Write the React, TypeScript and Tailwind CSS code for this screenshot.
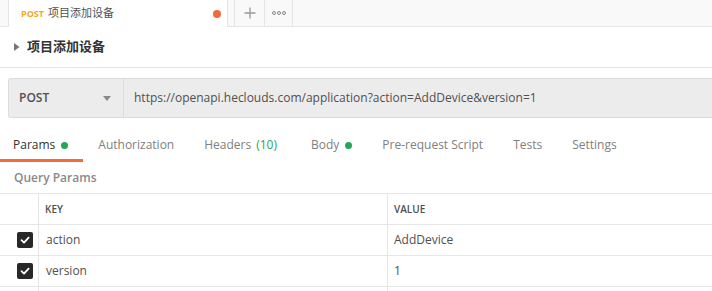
import React from 'react';

const tabs = [
    { label: 'Params', dot: true, active: true },
    { label: 'Authorization' },
    { label: 'Headers', count: '(10)' },
    { label: 'Body', dot: true },
    { label: 'Pre-request Script' },
    { label: 'Tests' },
    { label: 'Settings' },
];

const rows = [
    { key: 'action', value: 'AddDevice' },
    { key: 'version', value: '1' },
];

const Check: React.FC = () => (
    <div className="flex h-[16px] w-[16px] items-center justify-center rounded-[2px] bg-[#282828]">
        <svg width="10" height="10" viewBox="0 0 10 10">
            <path d="M1.5 5.2 L4 7.6 L8.6 2.6" fill="none" stroke="#fff" strokeWidth="1.8" strokeLinecap="round" strokeLinejoin="round" />
        </svg>
    </div>
);

const App: React.FC = () => {
    return (
        <div className="h-[291px] w-[712px] overflow-hidden bg-white font-['Open_Sans','Noto_Sans_CJK_SC',sans-serif] text-[#505050]">
            {/* Request tabs */}
            <div className="flex h-[27px] bg-[#f9f9f9]">
                <div className="w-[9px] border-b border-r border-[#e5e5e5]"></div>
                <div className="flex w-[218px] items-center bg-white pl-[12px] pr-[6px]">
                    <span className="text-[9px] font-bold text-[#f5a623]">POST</span>
                    <span className="ml-[4px] text-[11px] text-[#505050]">项目添加设备</span>
                    <span className="ml-auto h-[8px] w-[8px] rounded-full bg-[#f26b3a]"></span>
                </div>
                <div className="w-[7px] border-b border-l border-[#e5e5e5]"></div>
                <div className="flex w-[30px] items-center justify-center border-b border-l border-[#e5e5e5]">
                    <svg width="12" height="12" viewBox="0 0 12 12">
                        <path d="M6 0.5 V11.5 M0.5 6 H11.5" stroke="#999" strokeWidth="1.3" />
                    </svg>
                </div>
                <div className="flex w-[29px] items-center justify-center gap-[1px] border-b border-l border-r border-[#e5e5e5]">
                    {[0, 1, 2].map((i) => (
                        <span key={i} className="h-[4px] w-[4px] rounded-full border border-[#888]"></span>
                    ))}
                </div>
                <div className="flex-1 border-b border-[#e5e5e5]"></div>
            </div>

            {/* Request name */}
            <div className="flex h-[41px] items-center border-b border-[#e5e5e5] pl-[14px]">
                <svg width="6" height="8" viewBox="0 0 6 8">
                    <path d="M0 0 L5.5 4 L0 8 Z" fill="#777" />
                </svg>
                <span className="ml-[7px] text-[13px] font-semibold text-[#333]">项目添加设备</span>
            </div>

            {/* URL bar */}
            <div className="ml-[8px] mt-[10px] flex h-[40px] rounded-l-[3px] border border-r-0 border-[#dcdcdc] bg-[#ececec]">
                <div className="flex w-[115px] items-center border-r border-[#dcdcdc] pl-[10px] pr-[12px]">
                    <span className="text-[12px] font-semibold text-[#505050]">POST</span>
                    <svg className="ml-auto" width="8" height="5" viewBox="0 0 8 5">
                        <path d="M0 0 H8 L4 5 Z" fill="#888" />
                    </svg>
                </div>
                <div className="flex items-center pl-[10px] text-[12px] text-[#505050]">
                    https://openapi.heclouds.com/application?action=AddDevice&amp;version=1
                </div>
            </div>

            {/* Tabs */}
            <div className="mt-[13px] flex h-[31px] items-stretch">
                {tabs.map((t) => (
                    <div
                        key={t.label}
                        className={`flex items-center border-b-[3px] text-[12px] ${t.active ? 'mr-[15px] border-[#f26b3a] pl-[13px] pr-[15px] text-[#333]' : 'border-transparent text-[#808080]'} ${t.count ? 'mr-[34px]' : t.active ? '' : 'mr-[30px]'}`}
                    >
                        <span>{t.label}</span>
                        {t.count && <span className="ml-[5px] text-[#26a65b]">{t.count}</span>}
                        {t.dot && <span className="ml-[6px] h-[7px] w-[7px] rounded-full bg-[#26a65b]"></span>}
                    </div>
                ))}
            </div>

            {/* Query params */}
            <div className="flex h-[31px] items-center pl-[14px] text-[12px] font-semibold text-[#8a8a8a]">Query Params</div>

            <div className="border-t border-[#e6e6e6]">
                <div className="grid h-[31px] grid-cols-[39px_349px_1fr] border-b border-[#e6e6e6] text-[10px] font-semibold text-[#505050]">
                    <div className="border-r border-[#e6e6e6]"></div>
                    <div className="flex items-center border-r border-[#e6e6e6] pl-[6px]">KEY</div>
                    <div className="flex items-center pl-[6px]">VALUE</div>
                </div>
                {rows.map((r) => (
                    <div key={r.key} className="grid h-[31px] grid-cols-[39px_349px_1fr] border-b border-[#e6e6e6] text-[12px] text-[#505050]">
                        <div className="flex items-center justify-end border-r border-[#e6e6e6] pr-[5px]">
                            <Check />
                        </div>
                        <div className="flex items-center border-r border-[#e6e6e6] pl-[7px]">{r.key}</div>
                        <div className="flex items-center pl-[6px]">{r.value}</div>
                    </div>
                ))}
                <div className="grid h-[31px] grid-cols-[39px_349px_1fr]">
                    <div className="border-r border-[#e6e6e6]"></div>
                    <div className="border-r border-[#e6e6e6]"></div>
                    <div></div>
                </div>
            </div>
        </div>
    );
};

export default App;
